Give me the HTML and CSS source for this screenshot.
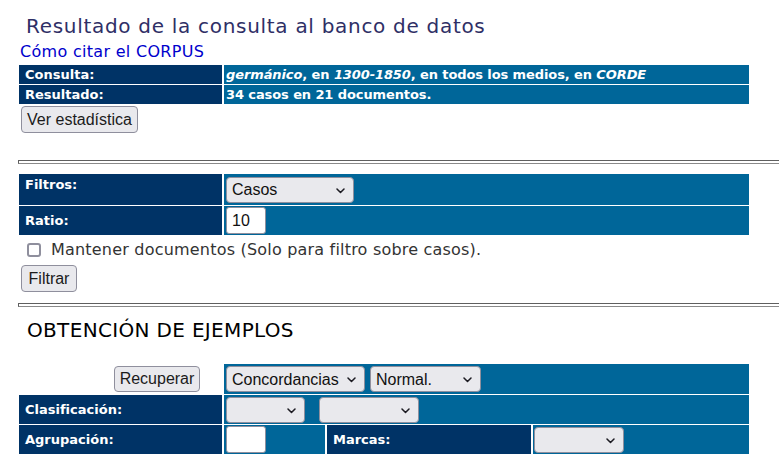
FILE: index.html
```html
<!DOCTYPE html>
<html lang="es">
<head>
<meta charset="utf-8">
<title>Resultado de la consulta al banco de datos</title>
<link rel="stylesheet" href="styles.css">
</head>
<body>
<main class="page">
  <section class="block">
    <h1 class="title">Resultado de la consulta al banco de datos</h1>
    <a class="cite" href="#">Cómo citar el CORPUS</a>
    <div class="grid summary">
      <div class="lab">Consulta:</div>
      <div class="val"><i>germánico</i>, en&nbsp;<i>1300-1850</i>, en todos los medios, en&nbsp;<i>CORDE</i></div>
      <div class="lab">Resultado:</div>
      <div class="val">34 casos en 21 documentos.</div>
    </div>
    <button class="btn btn-stat" type="button">Ver estadística</button>
  </section>

  <hr class="rule rule-1">

  <section class="block">
    <div class="grid filter-grid">
      <div class="lab lab-top">Filtros:</div>
      <div class="val">
        <span class="sel sel-casos">
          <select><option>Casos</option></select>
          <svg class="chev" width="9" height="6" viewBox="0 0 9 6"><path d="M1 1 L4.5 4.5 L8 1" fill="none" stroke="#1c1b22" stroke-width="1.5" stroke-linecap="round" stroke-linejoin="round"/></svg>
        </span>
      </div>
      <div class="lab">Ratio:</div>
      <div class="val"><input class="num" type="text" value="10"></div>
    </div>
    <label class="check"><input type="checkbox"><span>Mantener documentos (Solo para filtro sobre casos).</span></label>
    <button class="btn btn-filter" type="button">Filtrar</button>
  </section>

  <hr class="rule rule-2">

  <section class="block">
    <h2 class="heading">OBTENCIÓN DE EJEMPLOS</h2>
    <div class="grid4">
      <div class="cell-btn"><button class="btn btn-rec" type="button">Recuperar</button></div>
      <div class="val span3">
        <span class="sel sel-conc">
          <select><option>Concordancias</option></select>
          <svg class="chev" width="9" height="6" viewBox="0 0 9 6"><path d="M1 1 L4.5 4.5 L8 1" fill="none" stroke="#1c1b22" stroke-width="1.5" stroke-linecap="round" stroke-linejoin="round"/></svg>
        </span>
        <span class="sel sel-norm">
          <select><option>Normal.</option></select>
          <svg class="chev" width="9" height="6" viewBox="0 0 9 6"><path d="M1 1 L4.5 4.5 L8 1" fill="none" stroke="#1c1b22" stroke-width="1.5" stroke-linecap="round" stroke-linejoin="round"/></svg>
        </span>
      </div>
      <div class="lab">Clasificación:</div>
      <div class="val span3">
        <span class="sel sel-c1">
          <select><option></option></select>
          <svg class="chev" width="9" height="6" viewBox="0 0 9 6"><path d="M1 1 L4.5 4.5 L8 1" fill="none" stroke="#1c1b22" stroke-width="1.5" stroke-linecap="round" stroke-linejoin="round"/></svg>
        </span>
        <span class="sel sel-c2">
          <select><option></option></select>
          <svg class="chev" width="9" height="6" viewBox="0 0 9 6"><path d="M1 1 L4.5 4.5 L8 1" fill="none" stroke="#1c1b22" stroke-width="1.5" stroke-linecap="round" stroke-linejoin="round"/></svg>
        </span>
      </div>
      <div class="lab">Agrupación:</div>
      <div class="val"><input class="num" type="text" value=""></div>
      <div class="lab">Marcas:</div>
      <div class="val val-tight">
        <span class="sel sel-marcas">
          <select><option></option></select>
          <svg class="chev" width="9" height="6" viewBox="0 0 9 6"><path d="M1 1 L4.5 4.5 L8 1" fill="none" stroke="#1c1b22" stroke-width="1.5" stroke-linecap="round" stroke-linejoin="round"/></svg>
        </span>
      </div>
    </div>
  </section>
</main>
</body>
</html>
```

FILE: styles.css
```css
html, body {
  margin: 0;
  padding: 0;
  background: #ffffff;
}

body {
  font-family: "DejaVu Sans", Verdana, sans-serif;
  color: #333333;
}

.page {
  width: 779px;
}

.block {
  padding-left: 19px;
  width: 730px;
}

.title {
  margin: 0 0 0 7px;
  padding-top: 14px;
  font-size: 20px;
  line-height: 24px;
  letter-spacing: 0.7px;
  font-weight: normal;
  color: #2f2f66;
}

.cite {
  display: block;
  width: max-content;
  margin: 4px 0 0 1px;
  font-size: 16px;
  line-height: 19px;
  letter-spacing: 0.3px;
  color: #0000cc;
  text-decoration: none;
}

.grid {
  display: grid;
  grid-template-columns: 203px 1fr;
  column-gap: 2px;
  row-gap: 1px;
  font-size: 13px;
  font-weight: bold;
  color: #ffffff;
}

.summary {
  margin-top: 4px;
  grid-auto-rows: 19px;
}

.filter-grid {
  margin-top: 10px;
  grid-template-rows: 31px 29px;
}

.lab {
  background: #003366;
  padding-left: 6px;
  display: flex;
  align-items: center;
  white-space: nowrap;
}

.lab-top {
  align-items: flex-start;
  padding-top: 3px;
}

.val {
  background: #006699;
  padding-left: 2px;
  display: flex;
  align-items: center;
  white-space: nowrap;
  letter-spacing: -0.1px;
}

.val i {
  font-style: italic;
}

.val-tight {
  padding-left: 1px;
}

.btn {
  font-family: "Liberation Sans", Arial, sans-serif;
  font-size: 16px;
  color: #1b1b1b;
  background: #e9e9ed;
  border: 1px solid #8f8f9d;
  border-radius: 4px;
  height: 27px;
  padding: 0;
  margin: 0;
  display: block;
  text-align: center;
}

.btn-stat {
  margin: 2px 0 0 2px;
  width: 117px;
}

.btn-filter {
  margin: 4px 0 0 2px;
  width: 56px;
}

.btn-rec {
  width: 86px;
  height: 26px;
}

.rule {
  display: block;
  height: 2px;
  margin: 0 0 0 18px;
  padding: 0;
  border: 0;
  border-top: 1px solid #5f5f5f;
  border-left: 1px solid #5f5f5f;
  border-bottom: 1px solid #8a8a8a;
}

.rule-1 {
  margin-top: 27px;
}

.rule-2 {
  margin-top: 11px;
}

.sel {
  position: relative;
  display: inline-block;
  height: 26px;
}

.sel select {
  appearance: none;
  -webkit-appearance: none;
  box-sizing: border-box;
  height: 26px;
  margin: 0;
  padding: 0 0 0 5px;
  font-family: "Liberation Sans", Arial, sans-serif;
  font-size: 16px;
  color: #111111;
  background: #e9e9ed;
  border: 1px solid #8f8f9d;
  border-radius: 4px;
  display: block;
}

.chev {
  position: absolute;
  right: 9px;
  top: 11px;
  pointer-events: none;
}

.sel-casos select { width: 128px; }
.sel-conc select { width: 139px; }
.sel-norm { margin-left: 5px; }
.sel-norm select { width: 111px; }
.sel-c1 select { width: 79px; }
.sel-c2 { margin-left: 14px; }
.sel-c2 select { width: 100px; }
.sel-marcas select { width: 90px; }

.num {
  box-sizing: border-box;
  width: 40px;
  height: 27px;
  margin: 0;
  padding: 0 5px;
  font-family: "Liberation Sans", Arial, sans-serif;
  font-size: 16px;
  color: #111111;
  background: #ffffff;
  border: 1px solid #8f8f9d;
  border-radius: 3px;
}

.check {
  display: flex;
  align-items: center;
  height: 23px;
  margin-top: 3px;
  padding-left: 8px;
  font-size: 16px;
  letter-spacing: 0.2px;
  color: #333333;
}

.check input {
  appearance: none;
  -webkit-appearance: none;
  box-sizing: border-box;
  width: 14px;
  height: 14px;
  margin: 0 10px 0 0;
  border: 2px solid #8f8f9d;
  border-radius: 3px;
  background: #ffffff;
}

.heading {
  margin: 11px 0 0 8px;
  font-size: 20px;
  line-height: 24px;
  letter-spacing: 0.33px;
  font-weight: normal;
  color: #000000;
}

.grid4 {
  margin-top: 22px;
  display: grid;
  grid-template-columns: 203px 101px 204px 216px;
  grid-template-rows: 30px 29px 29px;
  column-gap: 2px;
  row-gap: 1px;
  font-size: 13px;
  font-weight: bold;
  color: #ffffff;
}

.cell-btn {
  display: flex;
  align-items: center;
  justify-content: flex-end;
  padding-right: 22px;
}

.span3 {
  grid-column: span 3;
}
```
